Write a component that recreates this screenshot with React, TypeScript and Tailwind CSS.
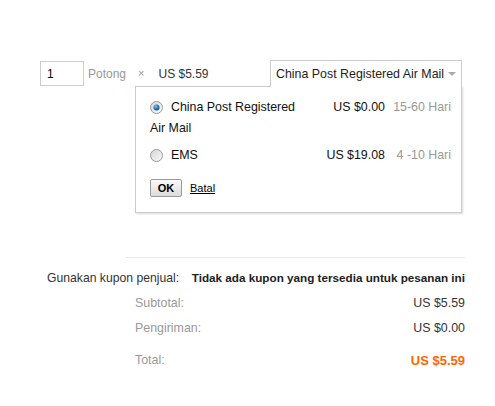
import React from "react";

function Radio({ checked }: { checked?: boolean }) {
  return (
    <svg width="13" height="13" viewBox="0 0 13 13" className="shrink-0">
      <defs>
        <linearGradient id={checked ? "rg1" : "rg0"} x1="0" y1="0" x2="1" y2="1">
          <stop offset="0" stopColor="#d4d4d4" />
          <stop offset="1" stopColor="#fbfbfb" />
        </linearGradient>
        <radialGradient id="dot" cx="0.4" cy="0.35" r="0.7">
          <stop offset="0" stopColor="#8fd0f5" />
          <stop offset="0.5" stopColor="#2b78b8" />
          <stop offset="1" stopColor="#124a7c" />
        </radialGradient>
      </defs>
      <circle cx="6.5" cy="6.5" r="6" fill={`url(#${checked ? "rg1" : "rg0"})`} stroke="#9a9a9a" strokeWidth="1" />
      {checked && <circle cx="6.5" cy="6.5" r="3" fill="url(#dot)" />}
    </svg>
  );
}

const options = [
  { name: "China Post Registered", name2: "Air Mail", price: "US $0.00", days: "15-60 Hari", checked: true },
  { name: "EMS", price: "US $19.08", days: "4 -10 Hari" },
];

export default function App() {
  return (
    <div
      className="w-[495px] h-[406px] bg-white text-[#333] text-[12px] leading-none overflow-hidden whitespace-nowrap"
      style={{ fontFamily: '"Liberation Sans", Arial, sans-serif' }}
    >
      {/* Quantity row */}
      <div className="flex items-center pt-[60px] pl-[40px] pr-[33px]">
        <div className="w-[44px] h-[25px] border border-[#ccc] flex items-center pl-[6px] text-[12px] text-black">
          1
        </div>
        <span className="ml-[4px] text-[#999] text-[12px]">Potong</span>
        <span className="ml-[12px] text-[#999] text-[11px]">×</span>
        <span className="ml-[14px] text-[12px]">US $5.59</span>

        <div className="relative ml-auto">
          <div className="w-[192px] h-[27px] border border-[#ccc] border-b-0 flex items-center pl-[5px] pr-[5px] text-[12.4px] text-[#222] bg-white relative z-10">
            <span>China Post Registered Air Mail</span>
            <span className="ml-auto w-0 h-0 border-l-[4px] border-r-[4px] border-t-[4px] border-l-transparent border-r-transparent border-t-[#aaa]" />
          </div>
          {/* Dropdown */}
          <div className="absolute right-0 top-[26px] w-[327px] h-[127px] border border-[#ccc] bg-white shadow-[1px_1px_2px_rgba(0,0,0,0.15)] pt-[12px] pl-[14px] pr-[10px] text-[12.4px] text-[#111]">
            {options.map((o, i) => (
              <div key={i} className={i === 0 ? "" : "mt-[11px]"}>
                <div className="flex items-center h-[16px]">
                  <Radio checked={o.checked} />
                  <span className="ml-[8px]">{o.name}</span>
                  <span className="ml-auto">{o.price}</span>
                  <span className="ml-[7px] w-[59px] text-right text-[#999]">{o.days}</span>
                </div>
                {o.name2 && <div className="mt-[5px] h-[16px] flex items-center">{o.name2}</div>}
              </div>
            ))}
            <div className="flex items-center mt-[16px]">
              <button className="w-[32px] h-[18px] border border-[#999] rounded-[2px] bg-gradient-to-b from-[#fafafa] to-[#dcdcdc] text-[11px] font-bold text-black flex items-center justify-center">
                OK
              </button>
              <span className="ml-[8px] text-[11px] underline text-black">Batal</span>
            </div>
          </div>
        </div>
      </div>

      {/* Summary */}
      <div className="mt-[170px] ml-[126px] mr-[30px] border-t border-[#e8e8e8]" />
      <div className="mr-[30px] mt-[13px] flex items-center h-[14px]">
        <span className="ml-[47px] text-[12.2px] text-[#333]">Gunakan kupon penjual:</span>
        <span className="ml-auto text-[11.7px] font-bold text-[#222]">Tidak ada kupon yang tersedia untuk pesanan ini</span>
      </div>
      <div className="ml-[135px] mr-[30px] mt-[11px] flex items-center h-[14px] text-[12.4px]">
        <span className="text-[#999]">Subtotal:</span>
        <span className="ml-auto">US $5.59</span>
      </div>
      <div className="ml-[135px] mr-[30px] mt-[11px] flex items-center h-[14px] text-[12.4px]">
        <span className="text-[#999]">Pengiriman:</span>
        <span className="ml-auto">US $0.00</span>
      </div>
      <div className="ml-[135px] mr-[30px] mt-[18px] flex items-center h-[14px]">
        <span className="text-[12.4px] text-[#999]">Total:</span>
        <span className="ml-auto text-[13px] font-bold text-[#ff6600]">US $5.59</span>
      </div>
    </div>
  );
}
